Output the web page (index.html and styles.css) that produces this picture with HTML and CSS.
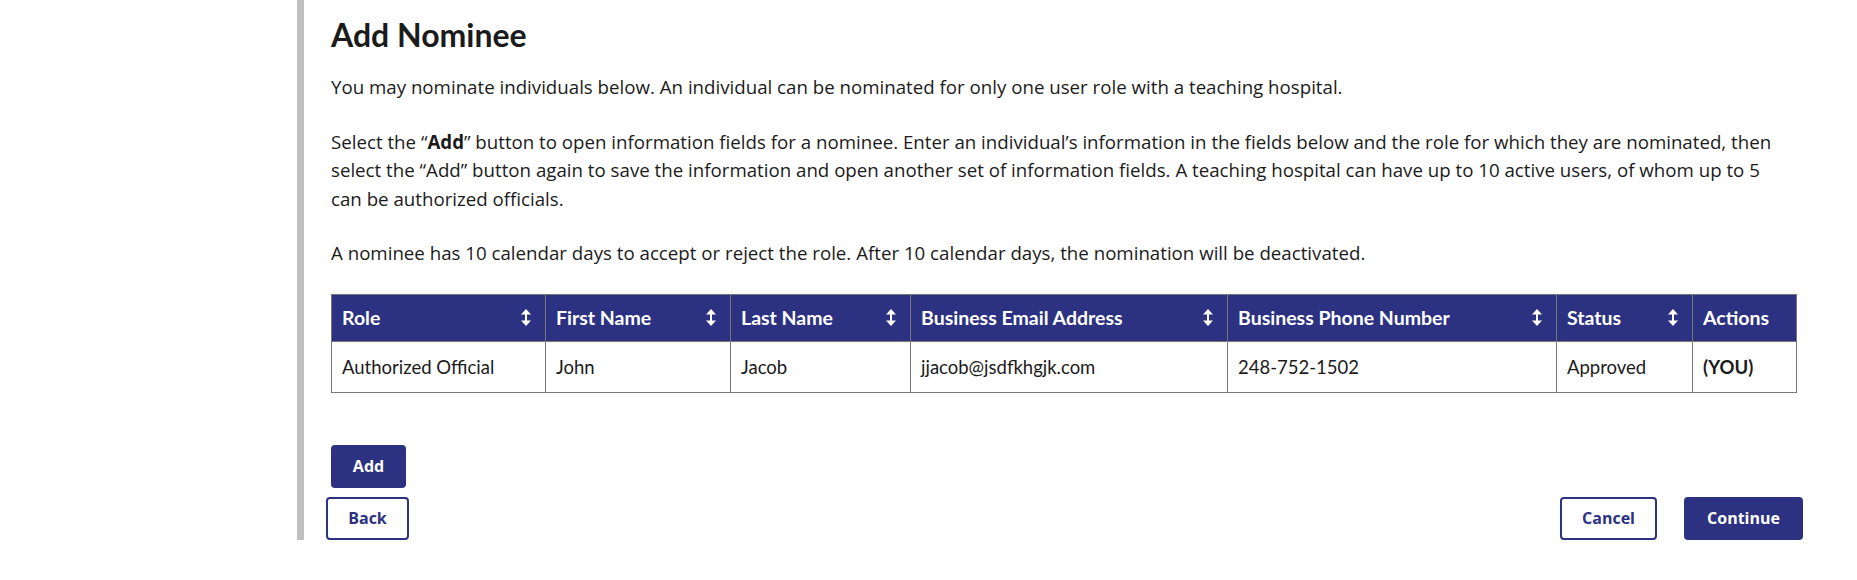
FILE: index.html
```html
<!DOCTYPE html>
<html lang="en">
<head>
    <meta charset="UTF-8">
    <meta name="viewport" content="width=device-width, initial-scale=1.0">
    <title>Add Nominee</title>
    <link rel="stylesheet" href="styles.css">
</head>
<body>
    <div class="layout">
        <div class="sidebar"></div>
        <main class="content">
            <h1>Add Nominee</h1>
            <p>You may nominate individuals below. An individual can be nominated for only one user role with a teaching hospital.</p>
            <p>Select the “<strong>Add</strong>” button to open information fields for a nominee. Enter an individual’s information in the fields below and the role for which they are nominated, then select the “Add” button again to save the information and open another set of information fields. A teaching hospital can have up to 10 active users, of whom up to 5 can be authorized officials.</p>
            <p>A nominee has 10 calendar days to accept or reject the role. After 10 calendar days, the nomination will be deactivated.</p>

            <table class="nominees">
                <colgroup>
                    <col style="width: 214px">
                    <col style="width: 185px">
                    <col style="width: 180px">
                    <col style="width: 317px">
                    <col style="width: 329px">
                    <col style="width: 136px">
                    <col>
                </colgroup>
                <thead>
                    <tr>
                        <th><div class="th-inner">Role <svg class="sort" viewBox="0 0 10 17"><polygon points="5,0 10,5.5 0,5.5"/><polygon points="5,17 10,11.5 0,11.5"/><rect x="4" y="5" width="2" height="7"/></svg></div></th>
                        <th><div class="th-inner">First Name <svg class="sort" viewBox="0 0 10 17"><polygon points="5,0 10,5.5 0,5.5"/><polygon points="5,17 10,11.5 0,11.5"/><rect x="4" y="5" width="2" height="7"/></svg></div></th>
                        <th><div class="th-inner">Last Name <svg class="sort" viewBox="0 0 10 17"><polygon points="5,0 10,5.5 0,5.5"/><polygon points="5,17 10,11.5 0,11.5"/><rect x="4" y="5" width="2" height="7"/></svg></div></th>
                        <th><div class="th-inner">Business Email Address <svg class="sort" viewBox="0 0 10 17"><polygon points="5,0 10,5.5 0,5.5"/><polygon points="5,17 10,11.5 0,11.5"/><rect x="4" y="5" width="2" height="7"/></svg></div></th>
                        <th><div class="th-inner">Business Phone Number <svg class="sort" viewBox="0 0 10 17"><polygon points="5,0 10,5.5 0,5.5"/><polygon points="5,17 10,11.5 0,11.5"/><rect x="4" y="5" width="2" height="7"/></svg></div></th>
                        <th><div class="th-inner">Status <svg class="sort" viewBox="0 0 10 17"><polygon points="5,0 10,5.5 0,5.5"/><polygon points="5,17 10,11.5 0,11.5"/><rect x="4" y="5" width="2" height="7"/></svg></div></th>
                        <th><div class="th-inner">Actions</div></th>
                    </tr>
                </thead>
                <tbody>
                    <tr>
                        <td>Authorized Official</td>
                        <td>John</td>
                        <td>Jacob</td>
                        <td>jjacob@jsdfkhgjk.com</td>
                        <td>248-752-1502</td>
                        <td>Approved</td>
                        <td><strong>(YOU)</strong></td>
                    </tr>
                </tbody>
            </table>

            <div class="add-row">
                <button class="btn btn-primary btn-add">Add</button>
            </div>

            <div class="footer">
                <button class="btn btn-outline btn-back">Back</button>
                <div class="footer-right">
                    <button class="btn btn-outline btn-cancel">Cancel</button>
                    <button class="btn btn-primary btn-continue">Continue</button>
                </div>
            </div>
        </main>
    </div>
</body>
</html>
```

FILE: styles.css
```css
body {
    margin: 0;
    font-family: "Open Sans", "Noto Sans", sans-serif;
    color: #1b1b1b;
    background-color: #fff;
}
.layout {
    display: flex;
}
.sidebar {
    width: 297px;
    flex-shrink: 0;
}
.content {
    flex: 1;
    border-left: 7px solid #c0c0c0;
    padding: 0 60px 0 27px;
    height: 540px;
    box-sizing: border-box;
}
h1 {
    font-family: Lato, sans-serif;
    font-size: 32px;
    font-weight: 700;
    line-height: 36px;
    margin: 17px 0 20px;
}
p {
    font-size: 18.7px;
    line-height: 28.5px;
    margin: 0 0 26px;
    padding-right: 4px;
}
.nominees {
    width: 100%;
    table-layout: fixed;
    border-collapse: collapse;
    font-family: Lato, sans-serif;
    font-size: 18.5px;
}
.nominees th,
.nominees td {
    border: 1px solid #777;
    padding: 0 10px;
    text-align: left;
}
.nominees th {
    background-color: #2c3281;
    color: #fff;
    height: 46px;
    font-size: 19.5px;
    font-weight: 700;
}
.nominees td {
    height: 50px;
}
.th-inner {
    display: flex;
    justify-content: space-between;
    align-items: center;
    padding-right: 4px;
}
.sort {
    width: 10px;
    height: 17px;
    fill: #fff;
}
.add-row {
    margin-top: 52px;
}
.btn {
    font-family: "Open Sans", sans-serif;
    font-size: 16px;
    font-weight: 700;
    border-radius: 4px;
    box-sizing: border-box;
    height: 43px;
    cursor: pointer;
}
.btn-primary {
    background-color: #2c3281;
    border: none;
    color: #fff;
}
.btn-outline {
    background-color: #fff;
    border: 2px solid #2c3281;
    color: #2c3281;
}
.btn-add {
    width: 75px;
}
.footer {
    display: flex;
    justify-content: space-between;
    margin: 9px -6px 0 -5px;
}
.footer-right {
    display: flex;
    gap: 27px;
}
.btn-back {
    width: 83px;
}
.btn-cancel {
    width: 97px;
}
.btn-continue {
    width: 119px;
}
```
